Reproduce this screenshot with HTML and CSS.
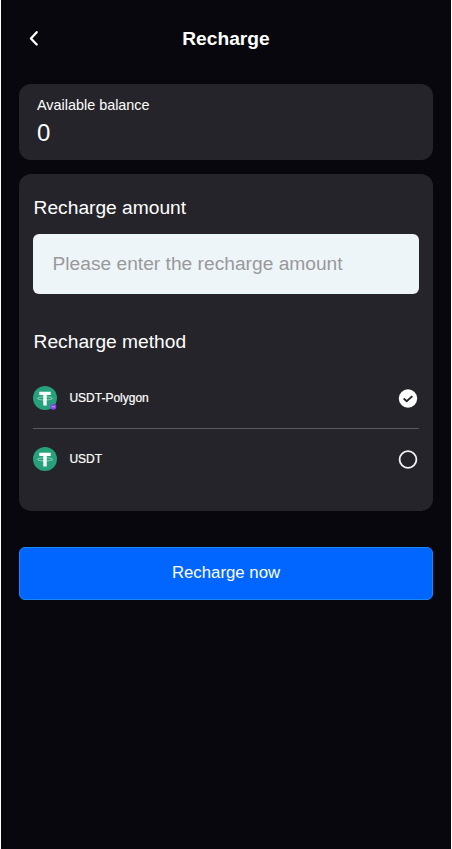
FILE: index.html
```
<!DOCTYPE html>
<html lang="en">
<head>
<meta charset="utf-8">
<title>Recharge</title>
<link rel="stylesheet" href="styles.css">
</head>
<body>
<main class="app">
  <header class="nav">
    <svg class="back" viewBox="0 0 12 18" fill="none" stroke="#fff" stroke-width="2.3" stroke-linecap="round" stroke-linejoin="round"><path d="M8.7 3.2 2.9 9.5 8.7 15.5"/></svg>
    <h1 class="title">Recharge</h1>
  </header>
  <section class="card balance">
    <div class="balance-label">Available balance</div>
    <div class="balance-value">0</div>
  </section>
  <section class="card form">
    <h2 class="heading">Recharge amount</h2>
    <input class="amount" type="text" placeholder="Please enter the recharge amount">
    <h2 class="heading method-heading">Recharge method</h2>
    <div class="method">
      <svg class="coin" viewBox="0 0 24 24"><circle cx="12" cy="12" r="12" fill="#26a17b"/><ellipse cx="12" cy="12.4" rx="7.5" ry="1.6" fill="none" stroke="#fff" stroke-opacity=".65" stroke-width=".7"/><path d="M6.3 5.8H17.7V8.9H13.7V19.6H10.3V8.9H6.3Z" fill="#fff"/><circle cx="20.3" cy="20.8" r="3" fill="#8247e5"/><path d="M18.7 21.1 19.9 20.2 20.8 21.3 22 20.4" fill="none" stroke="#c8aaf5" stroke-width=".9"/></svg>
      <span class="name">USDT-Polygon</span>
      <svg class="radio" viewBox="0 0 20 20"><circle cx="10" cy="10.5" r="9.2" fill="#fff"/><path d="M5.7 10.5 8.7 13.2 14.3 8.1" fill="none" stroke="#25242a" stroke-width="1.9"/></svg>
    </div>
    <div class="method">
      <svg class="coin" viewBox="0 0 24 24"><circle cx="12" cy="12" r="12" fill="#26a17b"/><ellipse cx="12" cy="12.4" rx="7.5" ry="1.6" fill="none" stroke="#fff" stroke-opacity=".65" stroke-width=".7"/><path d="M6.3 5.8H17.7V8.9H13.7V19.6H10.3V8.9H6.3Z" fill="#fff"/></svg>
      <span class="name">USDT</span>
      <svg class="radio" viewBox="0 0 20 20"><circle cx="10" cy="10.5" r="8.4" fill="none" stroke="#f4f4f4" stroke-width="1.8"/></svg>
    </div>
  </section>
  <button class="submit" type="button">Recharge now</button>
</main>
</body>
</html>
```

FILE: styles.css
```
* { box-sizing: border-box; }
body {
  margin: 0;
  background: #fff;
  color: #fff;
  font-family: "Liberation Sans", Arial, sans-serif;
}
.app {
  width: 450px;
  min-height: 849px;
  margin: 0 1px;
  padding: 0 18px;
  background: #07070d;
}
.nav {
  height: 84px;
  display: grid;
  grid-template-columns: 30px 1fr 30px;
  align-items: center;
  padding-bottom: 8px;
}
.back { width: 12px; height: 18px; margin-left: 9px; }
.title { margin: 0; padding-top: 1px; font-size: 19.2px; line-height: 24px; text-align: center; }
.card { background: #25242a; border-radius: 12px; }
.balance { height: 76px; padding: 12px 18px; }
.balance-label { font-size: 14.4px; line-height: 18px; }
.balance-value { font-size: 24px; line-height: 28px; margin-top: 5px; }
.form { height: 337px; margin-top: 14px; padding: 22px 14px 0; }
.heading { margin: 0; padding-left: 0.6px; font-size: 19.2px; line-height: 24px; font-weight: 400; }
.amount {
  display: block;
  width: 100%;
  height: 60px;
  margin-top: 14px;
  padding: 0 19.5px;
  border: 0;
  border-radius: 6px;
  background: #eef5f9;
  color: #333;
  font: 19.2px "Liberation Sans", Arial, sans-serif;
}
.amount::placeholder { color: #999; }
.method-heading { margin-top: 36px; }
.method { display: flex; align-items: center; height: 61px; margin-top: 14px; padding-right: 1px; border-bottom: 1px solid #59585d; }
.method + .method { height: 60px; margin-top: 0; border-bottom: 0; }
.coin { width: 24px; height: 24px; }
.name { flex: 1; margin-left: 12.4px; font-size: 12px; line-height: 16px; -webkit-text-stroke: 0.2px #fff; }
.radio { width: 20px; height: 20px; }
.submit {
  display: block;
  width: 100%;
  height: 53px;
  margin-top: 36px;
  padding: 0 0 2px;
  border: 1px solid #1989fa;
  border-radius: 6px;
  background: #06f;
  color: #fff;
  font: 16.8px "Liberation Sans", Arial, sans-serif;
}
```
